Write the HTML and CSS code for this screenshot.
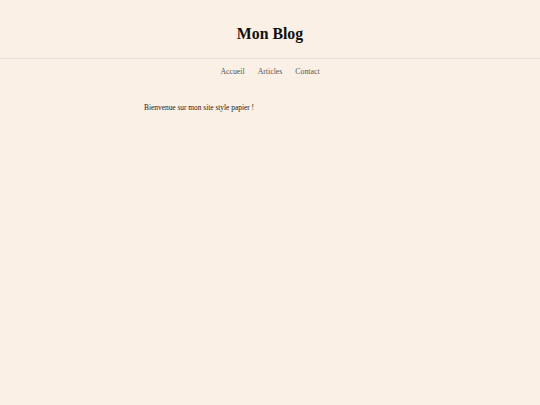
FILE: index.html
```html
<!DOCTYPE html>
<html lang="fr">
<head>
<meta charset="utf-8">
<title>Mon Blog</title>
<link rel="stylesheet" href="styles.css">
</head>
<body>
<header class="site-header">
  <h1 class="site-title">Mon Blog</h1>
</header>
<nav class="site-nav">
  <a href="#">Accueil</a>
  <a href="#">Articles</a>
  <a href="#">Contact</a>
</nav>
<main class="content">
  <p>Bienvenue sur mon site style papier !</p>
</main>
</body>
</html>
```
FILE: styles.css
```css
html, body {
  margin: 0;
  padding: 0;
  background: #faf0e6;
}
body {
  font-family: "Liberation Serif", "DejaVu Serif", serif;
  color: #222;
}
.site-header {
  height: 58px;
  border-bottom: 1px solid #e8e0d8;
  display: flex;
  align-items: center;
  justify-content: center;
}
.site-title {
  margin: 10px 0 0;
  font-size: 15.8px;
  font-weight: bold;
  color: #111;
}
.site-nav {
  display: flex;
  justify-content: center;
  gap: 13px;
  padding-top: 8px;
}
.site-nav a {
  font-size: 7.8px;
  color: #555;
  text-decoration: none;
}
.content {
  width: 252px;
  margin: 0 auto;
  padding-top: 27px;
}
.content p {
  margin: 0;
  font-size: 7.4px;
  color: #222;
}
```
